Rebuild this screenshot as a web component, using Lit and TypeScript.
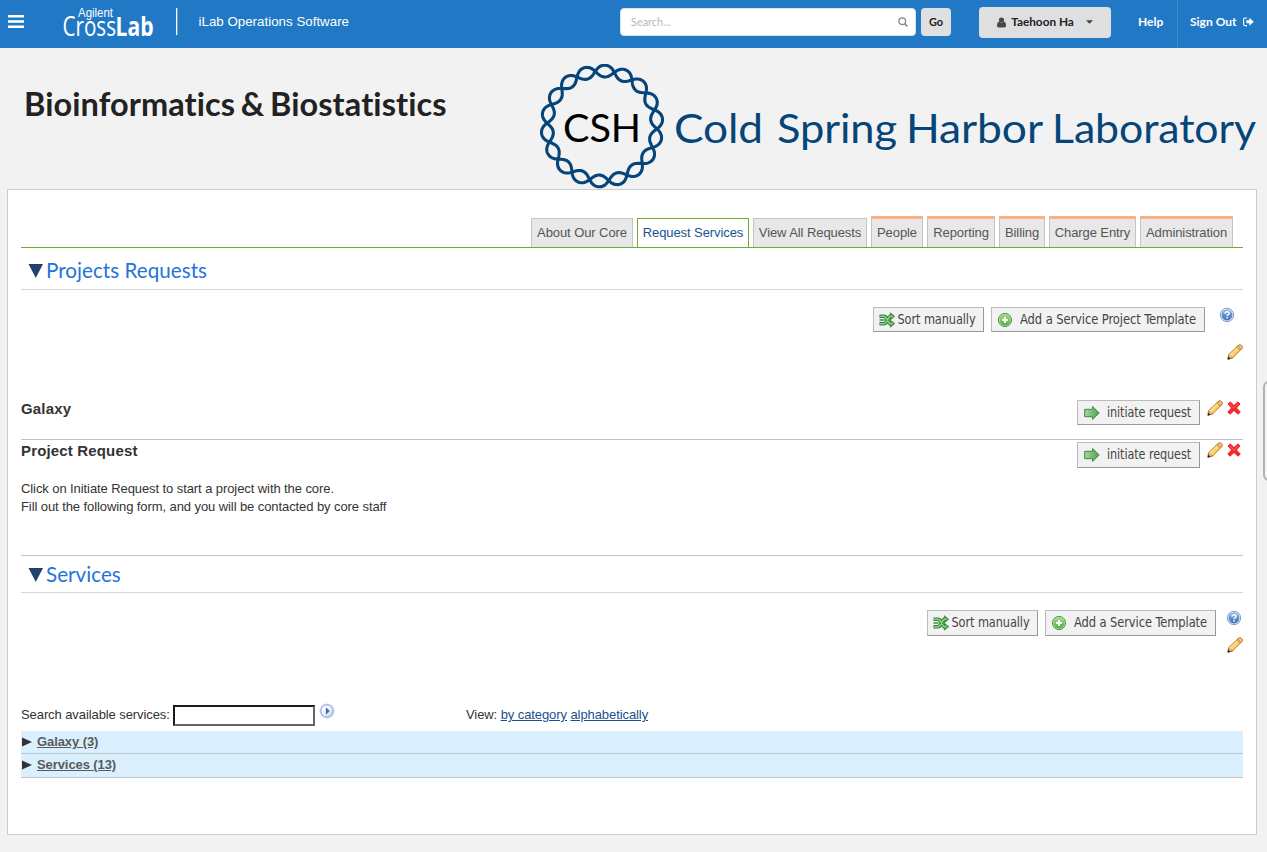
import { LitElement, html, svg, css } from "lit";
import { customElement, property } from "lit/decorators.js";

const pencil = html`<svg width="16" height="16" viewBox="0 0 16 16">
  <defs><linearGradient id="pg" x1="0" y1="0" x2="1" y2="1">
    <stop offset="0.25" stop-color="#fff0b4"/><stop offset="0.55" stop-color="#f9d06a"/><stop offset="0.8" stop-color="#e09a2a"/>
  </linearGradient></defs>
  <path d="M1 15.2 L1.6 10.6 L11 1.6 Q12.3 .4 14 1.2 Q15.9 2.4 15 4.4 L5.6 14Z" fill="url(#pg)" stroke="#b87420" stroke-width=".9" stroke-linejoin="round"/>
  <path d="M10.7 2 Q12.3 .5 14 1.2 Q15.8 2.4 15 4.4 L14 5.4Z" fill="#f6c9a0" stroke="#b8762c" stroke-width=".8"/>
  <path d="M9.8 2.9 L13.2 6.2" stroke="#c98b3c" stroke-width=".9"/>
  <path d="M1.5 11 L5.4 14.1 L.9 15.4Z" fill="#f0cf9c" stroke="#8a5a24" stroke-width=".5"/>
  <path d="M1.2 12.4 L3.6 14.7 L.7 15.6Z" fill="#222"/></svg>`;

const cross = html`<svg width="16" height="16" viewBox="0 0 16 16">
  <path d="M2 4 L4.3 1.9 L8 5.6 L11.9 1.9 L14 3.9 L10.4 8 L14.3 12 L12.1 14.2 L8 10.5 L4 14.2 L1.8 12 L5.6 8Z" fill="#f8282c" stroke="#ea1a20" stroke-width="1" stroke-linejoin="round"/>
  <path d="M3.3 3.7 L8 8.2 L12.6 3.6" fill="none" stroke="#ff6b6b" stroke-width=".9"/></svg>`;

const help = html`<svg width="16" height="16" viewBox="0 0 16 16">
  <defs><linearGradient id="hg" x1="0" y1="0" x2="0" y2="1"><stop offset="0" stop-color="#8fb2e0"/><stop offset="1" stop-color="#3d6fb4"/></linearGradient></defs>
  <circle cx="8" cy="8" r="6.7" fill="#dbe6f5" stroke="#6f94c6" stroke-width=".9"/>
  <circle cx="8" cy="8" r="5.4" fill="url(#hg)"/>
  <path d="M6 6.6 Q6.1 4.8 8 4.8 Q10 4.8 10 6.4 Q10 7.3 8.9 7.9 Q8.1 8.3 8.1 9.1" fill="none" stroke="#fff" stroke-width="1.5"/>
  <rect x="7.3" y="10.1" width="1.6" height="1.5" fill="#fff"/></svg>`;

const plus = html`<svg width="16" height="16" viewBox="0 0 16 16">
  <defs><linearGradient id="ag" x1="0" y1="0" x2="0" y2="1"><stop offset="0" stop-color="#a2da8e"/><stop offset="1" stop-color="#4fae3f"/></linearGradient></defs>
  <circle cx="8" cy="8" r="6.6" fill="#b9e0ad" stroke="#4a9a45" stroke-width="1"/>
  <circle cx="8" cy="8" r="5.5" fill="url(#ag)"/>
  <path d="M8 5.1v5.8M5.1 8h5.8" stroke="#fff" stroke-width="2"/></svg>`;

const shuffle = html`<svg width="16" height="16" viewBox="0 0 16 16">
  <g fill="none" stroke="#2f8434" stroke-width="3.6">
    <path d="M.5 4.3h4.4 Q6.6 4.3 7.7 6.6 T11 11.7h1.3M.5 11.7h4.4 Q6.6 11.7 7.7 9.4 T11 4.3h1.3"/></g>
  <path d="M11.4 .8 L15.7 4.3 L11.4 7.8Z M11.4 8.2 L15.7 11.7 L11.4 15.2Z" fill="#4da250" stroke="#2b7a30" stroke-width=".7"/>
  <g fill="none" stroke="#8fd08a" stroke-width="1.6">
    <path d="M1.2 4.3h3.7 Q6.6 4.3 7.7 6.6 T11 11.7h2.6M1.2 11.7h3.7 Q6.6 11.7 7.7 9.4 T11 4.3h2.6"/></g>
  <path d="M.5 8h5" stroke="#3c8c40" stroke-width="1.5"/></svg>`;

const arrow = html`<svg width="16" height="16" viewBox="0 0 16 16">
  <defs><linearGradient id="gg" x1="0" y1="0" x2="1" y2="0"><stop offset="0" stop-color="#a5d8a2"/><stop offset="1" stop-color="#4ba24c"/></linearGradient></defs>
  <path d="M.7 4.3H8.6V1.5L15.2 8L8.6 14.5V11.7H.7Z" fill="url(#gg)" stroke="#3c8b42" stroke-width="1"/></svg>`;

const play = html`<svg width="16" height="16" viewBox="0 0 16 16">
  <defs><linearGradient id="lg" x1="0" y1="0" x2="1" y2="1"><stop offset=".3" stop-color="#fff"/><stop offset="1" stop-color="#c3d0e6"/></linearGradient></defs>
  <circle cx="8" cy="8" r="7.6" fill="#c9dcf6"/>
  <circle cx="8" cy="8" r="6.1" fill="url(#lg)" stroke="#8aa6cf" stroke-width=".9"/>
  <path d="M6.9 4.2L10.6 8L6.9 11.8Z" fill="#2f6fc0"/></svg>`;

/** One strand of the ring: a radius that oscillates nine times around the circle. */
function strand(sign: number): string {
  const points: string[] = [];
  for (let deg = 0; deg <= 360; deg += 1) {
    const a = (deg * Math.PI) / 180;
    const w = 9 * (a - Math.PI / 60);
    const r = 55 + sign * 5.9 * Math.cos(w);
    const t = a + 0.01 * Math.sin(2 * w);
    points.push(`${(62 + r * Math.sin(t)).toFixed(2)} ${(62 - r * Math.cos(t)).toFixed(2)}`);
  }
  return `M${points.join("L")}Z`;
}

@customElement("tool-button")
class ToolButton extends LitElement {
  @property() icon = "arrow";
  @property() label = "";
  @property({ type: Number }) span = 80;
  static styles = css`
    :host { display: flex; box-sizing: border-box; align-items: center; height: 25px; padding-left: 5px;
      border: 1px solid; border-color: #bbb #999 #999 #bbb; background: #f2f2f2;
      font-family: "DejaVu Sans Condensed", "DejaVu Sans", sans-serif; font-stretch: condensed; white-space: nowrap; }
    svg { display: block; flex: none; overflow: visible; }
  `;
  render() {
    const icons: Record<string, unknown> = { arrow, plus, shuffle };
    const x = this.icon === "shuffle" ? 2.5 : 7;
    return html`${icons[this.icon]}<svg width=${x + this.span} height="22">
      <text x=${x} y="15" fill="#444" font-size="13.6"
        textLength=${this.span} lengthAdjust="spacingAndGlyphs">${this.label}</text></svg>`;
  }
}

@customElement("app-root")
class AppRoot extends LitElement {
  static styles = css`
    :host { display: block; position: relative; width: 1267px; height: 852px; overflow: hidden; background: #f2f2f2;
      color: #333; font: 13px/18px "Liberation Sans", Arial, sans-serif; letter-spacing: -.085px; }
    * { box-sizing: border-box; }
    svg { display: block; flex: none; }
    .bar { display: flex; height: 48px; background: #2179c6; color: #fff; font-family: Lato, sans-serif; letter-spacing: 0; }
    .brand { width: 620px; }
    .search { display: flex; align-items: center; justify-content: space-between; width: 296px; height: 28px; margin: 8px 5px 0 0;
      padding: 0 7px 0 10px; border: 1px solid #d9e2ea; border-radius: 4px; background: #fff; color: #b8b8b8; font-size: 10.9px; }
    .go, .user { display: flex; align-items: center; justify-content: center; border-radius: 4px; background: #dedfe0; color: #222; font-weight: 700; font-size: 11px; }
    .go { width: 30px; height: 28px; margin: 8px 28px 0 0; }
    .user { width: 132px; height: 31px; margin-top: 7px; padding: 0 0 1px; font-size: 11.8px; }
    .user .name { margin: 0 12px 0 5px; }
    .help { width: 67px; padding: 0 0 0 27px; border-right: 1px solid #3d8bcd; font-weight: 700; font-size: 12px; line-height: 44px; }
    .out { display: flex; align-items: center; height: 44px; gap: 7px; padding-left: 12px; font-weight: 700; font-size: 12px; white-space: nowrap; }
    .title { display: flex; height: 141px; }
    .title h1 { width: 540px; margin: 0; padding: 36px 0 0 24px; color: #222; font: 700 32.5px/40px Lato, sans-serif; letter-spacing: .08px; word-spacing: -2.4px; white-space: nowrap; }
    .logo { margin-top: 16px; }
    .panel { width: 1250px; height: 646px; margin-left: 7px; padding: 0 13px; border: 1px solid #ccc; background: #fff; }
    .tabs { display: flex; align-items: flex-end; justify-content: flex-end; gap: 4px; height: 58px; padding-right: 10px; border-bottom: 1px solid #72aa30; }
    .tab { height: 29px; padding-top: 5px; border: 1px solid #c4c4c4; border-bottom: 0; background: #e8e8e8; color: #555; text-align: center; white-space: nowrap; }
    .tab.on { border-color: #72aa30; background: #fff; color: #18528f; }
    .tab.admin { height: 31px; border-top: 3px solid #fbb080; }
    .w102 { width: 102px; } .w112 { width: 112px; } .w114 { width: 114px; } .w52 { width: 52px; }
    .w68 { width: 68px; } .w46 { width: 46px; } .w87 { width: 87px; } .w93 { width: 93px; }
    .head { display: flex; height: 42px; padding: 15px 0 0 7px; border-bottom: 1px solid #ccd8e2; color: #2473d8; font: 20.6px/16px Lato, sans-serif; letter-spacing: .04px; }
    .head svg { margin-right: 3px; }
    .head span { margin-top: -1px; }
    .head.second { height: 37px; padding-top: 11px; }
    .tools { display: flex; justify-content: flex-end; align-items: flex-start; height: 37px; padding: 17px 0 0; }
    .gap { margin-left: 7px; }
    .sort { width: 111px; }
    .project { width: 214px; }
    .service { width: 171px; }
    .initiate { width: 123px; padding-left: 6px; }
    .tools .project ~ svg { margin: 0 8px 0 14px; }
    .tools.low tool-button { height: 26px; }
    .tools.low .service ~ svg { margin: 0 1px 0 10px; }
    .edit { display: flex; justify-content: flex-end; }
    .edit.one { height: 73px; padding-top: 17px; }
    .edit.two { height: 70px; padding-top: 7px; }
    .item { display: flex; align-items: flex-start; height: 40px; border-bottom: 1px solid #bfc3c7; padding-right: 1px; }
    .item h3 { flex: 1; margin: 0; font-size: 15px; line-height: 18px; letter-spacing: .16px; }
    .item tool-button + svg { margin: 0 3px 0 7px; }
    .item.tall { height: 116px; padding-top: 2px; }
    .item.tall tool-button { height: 26px; }
    .copy { flex: 1; }
    .copy p { margin: 20px 0 0; }
    .find { display: flex; height: 31px; align-items: flex-start; }
    .find span { padding-top: 6px; white-space: nowrap; }
    .find .lead { width: 152px; }
    .find .field { width: 142px; height: 21px; margin: 5px 4px 0 0; border: 2px solid; border-color: #1c1c1c #666 #666 #1c1c1c; background: #fff; }
    .find svg { margin: 3px 131px 0 0; }
    .find a { color: #18528f; text-decoration: underline; }
    .cat { display: flex; height: 23px; padding: 2px 0 0 1px; border-bottom: 1px solid #bfc6ca; background: #daf0fe; color: #5a5a5a; font-weight: 700; }
    .cat:last-child { height: 24px; }
    .cat svg { margin: 4px 5px 0 0; }
    .cat u { text-underline-offset: 1px; }
    .handle { position: absolute; left: 1263px; top: 381px; width: 14px; height: 100px; border: 2px solid #b2b2b2; border-radius: 6px; background: #f5f5f5; }
  `;

  render() {
    const tabs: [string, string, string][] = [
      ["About Our Core", "w102", ""], ["Request Services", "w112", "on"], ["View All Requests", "w114", ""],
      ["People", "w52", "admin"], ["Reporting", "w68", "admin"], ["Billing", "w46", "admin"],
      ["Charge Entry", "w87", "admin"], ["Administration", "w93", "admin"],
    ];
    const words: [string, number, number][] = [
      ["Cold", 134, 89], ["Spring", 237, 120], ["Harbor", 366, 137], ["Laboratory", 512, 204],
    ];
    const down = html`<svg width="15" height="16"><path d="M.5 1H15L7.8 15Z" fill="#23426b"/></svg>`;
    const right = html`<svg width="10" height="10"><path d="M0 .5L10 5L0 9.5Z" fill="#333"/></svg>`;
    return html`
      <header class="bar">
        <svg class="brand" width="620" height="48" fill="#fff">
          <path d="M8 15h16v2.5H8zM8 20.3h16v2.5H8zM8 25.6h16v2.5H8z"/>
          <g font-family="'Liberation Sans Narrow','Liberation Sans',sans-serif">
            <text x="78" y="17" font-size="12" textLength="35" lengthAdjust="spacingAndGlyphs">Agilent</text>
          </g>
          <g font-family="'Open Sans','Liberation Sans',sans-serif">
            <text x="62.5" y="35.5" font-size="27.5" font-weight="400" textLength="53.5" lengthAdjust="spacingAndGlyphs">Cross</text>
            <text x="115.5" y="35.5" font-size="27.5" font-weight="700" textLength="38" lengthAdjust="spacingAndGlyphs">Lab</text>
          </g>
          <path d="M176 8h1.3v27H176z"/>
          <text x="198.5" y="26.4" font-family="Liberation Sans" font-size="13.3" textLength="150.5">iLab Operations Software</text>
        </svg>
        <div class="search">Search...<svg width="10" height="10" viewBox="0 0 10 10" fill="none" stroke="#858585"><circle cx="4.2" cy="4.2" r="3.4" stroke-width="1.3"/><path d="M6.7 6.7L9.4 9.4" stroke-width="1.6"/></svg></div>
        <div class="go">Go</div>
        <div class="user">
          <svg width="9" height="11" viewBox="0 0 9 11" fill="#484848"><circle cx="4.5" cy="3" r="2.6"/><path d="M0 8.8Q0 5 2.2 4.8Q4.5 6.6 6.8 4.8Q9 5 9 8.8Q9 10.6 7.4 10.6H1.6Q0 10.6 0 8.8Z"/></svg>
          <span class="name">Taehoon Ha</span>
          <svg width="7" height="4"><path d="M0 .2H7L3.5 3.8Z" fill="#444"/></svg>
        </div>
        <div class="help">Help</div>
        <div class="out">Sign Out<svg width="11" height="10" viewBox="0 0 11 10"><path d="M4 1H2Q.6 1 .6 2.4V7.2Q.6 8.6 2 8.6H4" fill="none" stroke="#fff" stroke-width="1.1"/><path d="M3.4 3.3H6.4V.8L10.8 4.8L6.4 8.8V6.3H3.4Z" fill="#fff"/></svg></div>
      </header>
      <section class="title">
        <h1>Bioinformatics &amp; Biostatistics</h1>
        <svg class="logo" width="720" height="125" fill="none">
          ${[1, -1].map((s) => svg`<path d=${strand(s)} stroke="#064579" stroke-width="3.1"/>`)}
          <g font-family="Lato,sans-serif">
            <text x="23" y="78.3" fill="#000" font-size="38.5" textLength="78" lengthAdjust="spacingAndGlyphs">CSH</text>
            ${words.map(([t, x, w]) => svg`<text x=${x} y="79" fill="#064579" font-size="41" textLength=${w} lengthAdjust="spacingAndGlyphs">${t}</text>`)}
          </g>
        </svg>
      </section>
      <main class="panel">
        <nav class="tabs">${tabs.map(([t, w, k]) => html`<div class="tab ${w} ${k}">${t}</div>`)}</nav>
        <div class="head">${down}<span>Projects Requests</span></div>
        <div class="tools">
          <tool-button class="sort" icon="shuffle" label="Sort manually" span="78"></tool-button>
          <tool-button class="project gap" icon="plus" label="Add a Service Project Template" span="176"></tool-button>${help}
        </div>
        <div class="edit one">${pencil}</div>
        <div class="item"><h3>Galaxy</h3><tool-button class="initiate" label="initiate request" span="84"></tool-button>${pencil}${cross}</div>
        <div class="item tall">
          <div class="copy"><h3>Project Request</h3><p>Click on Initiate Request to start a project with the core.<br>Fill out the following form, and you will be contacted by core staff</p></div>
          <tool-button class="initiate" label="initiate request" span="84"></tool-button>${pencil}${cross}
        </div>
        <div class="head second">${down}<span>Services</span></div>
        <div class="tools low">
          <tool-button class="sort" icon="shuffle" label="Sort manually" span="78"></tool-button>
          <tool-button class="service gap" icon="plus" label="Add a Service Template" span="133"></tool-button>${help}
        </div>
        <div class="edit two">${pencil}</div>
        <div class="find">
          <span class="lead">Search available services:</span><div class="field"></div>${play}
          <span>View: <a>by category</a> <a>alphabetically</a></span>
        </div>
        <div class="cat">${right}<u>Galaxy (3)</u></div>
        <div class="cat">${right}<u>Services (13)</u></div>
      </main>
      <div class="handle"></div>
    `;
  }
}
